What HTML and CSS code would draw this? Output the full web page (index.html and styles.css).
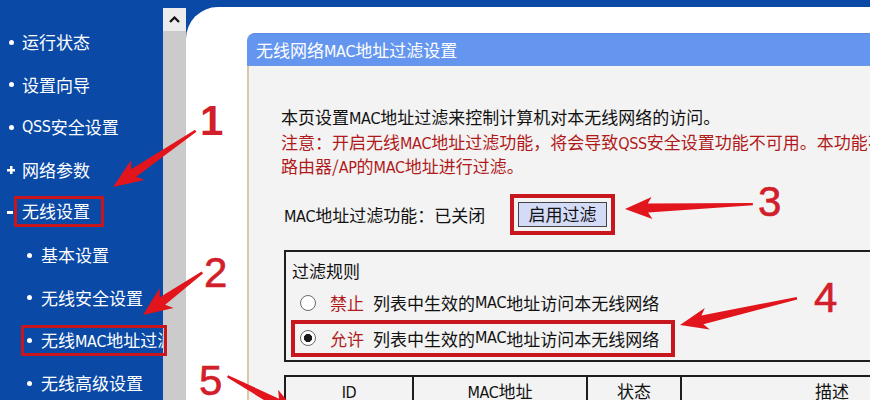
FILE: index.html
```html
<!DOCTYPE html>
<html lang="zh-CN">
<head>
<meta charset="utf-8">
<title>无线网络MAC地址过滤设置</title>
<link rel="stylesheet" href="styles.css">
</head>
<body>
<div class="app">
  <nav class="sidebar">
    <div class="item"><span class="dot"></span>运行状态</div>
    <div class="item"><span class="dot"></span>设置向导</div>
    <div class="item"><span class="dot"></span><span class="m">QSS</span>安全设置</div>
    <div class="item"><span class="plus"></span>网络参数</div>
    <div class="item"><span class="minus"></span><span class="mark mark-group">无线设置</span></div>
    <div class="item sub"><span class="dot"></span>基本设置</div>
    <div class="item sub"><span class="dot"></span>无线安全设置</div>
    <div class="item sub-marked"><span class="mark mark-sub"><span class="dot"></span><span class="clip">无线<span class="m">MAC</span>地址过滤</span></span></div>
    <div class="item sub"><span class="dot"></span>无线高级设置</div>
  </nav>
  <div class="scrollbar">
    <div class="scroll-up">
      <svg width="11" height="7" viewBox="0 0 11 7"><polyline points="1,6 5.5,1.5 10,6" fill="none" stroke="#111" stroke-width="2.2"/></svg>
    </div>
  </div>
  <main class="main">
    <div class="canvas">
      <section class="panel">
        <h1 class="panel-head">无线网络<span class="m">MAC</span>地址过滤设置</h1>
        <div class="panel-body">
          <p class="intro">本页设置<span class="m">MAC</span>地址过滤来控制计算机对本无线网络的访问。<br><span class="warn">注意：开启无线<span class="m">MAC</span>地址过滤功能，将会导致<span class="m">QSS</span>安全设置功能不可用。本功能不支持对<br>路由器/<span class="m">AP</span>的<span class="m">MAC</span>地址进行过滤。</span></p>
          <div class="status-row">
            <span class="status-label"><span class="m">MAC</span>地址过滤功能：已关闭</span>
            <span class="btn-mark"><button class="btn" type="button">启用过滤</button></span>
          </div>
          <div class="rules">
            <div class="rules-title">过滤规则</div>
            <div class="rule"><span class="radio"></span><span class="tag">禁止</span>列表中生效的<span class="m">MAC</span>地址访问本无线网络</div>
            <div class="rule rule-mark"><span class="radio on"></span><span class="tag">允许</span>列表中生效的<span class="m">MAC</span>地址访问本无线网络</div>
          </div>
          <table class="list">
            <thead>
              <tr>
                <th class="c-id"><span class="m">ID</span></th>
                <th class="c-mac"><span class="m">MAC</span>地址</th>
                <th class="c-st">状态</th>
                <th class="c-desc">描述</th>
              </tr>
            </thead>
            <tbody>
              <tr><td></td><td></td><td></td><td></td></tr>
            </tbody>
          </table>
        </div>
      </section>
    </div>
  </main>
</div>
<div class="annot">
  <svg class="arrows" width="870" height="400" viewBox="0 0 870 400">
    <g fill="#e2141c">
      <polygon transform="translate(113 187) rotate(-34.2)" points="0,0 30,-12 25,-4.5 100,-1.2 100,1.2 25,4.5 30,12"/>
      <polygon transform="translate(143 315) rotate(-35.6)" points="0,0 29,-12 24,-4.5 73,-1.2 73,1.2 24,4.5 29,12"/>
      <polygon transform="translate(625 209) rotate(-2.2)" points="0,0 27,-11 23,-4.5 128,-1.2 128,1.2 23,4.5 27,11"/>
      <polygon transform="translate(680 325) rotate(-12.9)" points="0,0 28,-11 23,-4.5 120,-1.2 120,1.2 23,4.5 28,11"/>
      <polygon transform="translate(298 414) rotate(-151.8)" points="0,0 29,-12 24,-4.5 80,-1.2 80,1.2 24,4.5 29,12"/>
    </g>
  </svg>
  <span class="num n1">1</span>
  <span class="num n2">2</span>
  <span class="num n3">3</span>
  <span class="num n4">4</span>
  <span class="num n5">5</span>
</div>
</body>
</html>
```
FILE: styles.css
```css
html, body {
  margin: 0;
  padding: 0;
}
body {
  width: 870px;
  height: 400px;
  overflow: hidden;
  position: relative;
  font-family: "Noto Sans CJK SC", "Noto Sans", sans-serif;
  font-size: 17px;
  color: #111;
  background: #0a4aa6;
}
.m {
  font-family: "Liberation Sans Narrow", "DejaVu Sans Condensed", "Liberation Sans", Arial, sans-serif;
  font-stretch: condensed;
  font-size: 16px;
  letter-spacing: -0.3px;
  line-height: 1;
}
.app {
  display: flex;
  height: 400px;
}

/* sidebar */
.sidebar {
  width: 163px;
  flex: none;
  padding-top: 21px;
  background: #0a4aa6;
  color: #fff;
}
.item {
  height: 42.6px;
  display: flex;
  align-items: center;
  padding-left: 9px;
  white-space: nowrap;
  line-height: 24px;
}
.item.sub {
  padding-left: 27px;
}
.item.sub-marked {
  padding-left: 21px;
}
.dot {
  width: 5px;
  height: 5px;
  border-radius: 50%;
  background: #fff;
  margin-right: 8px;
  flex: none;
}
.sub .dot,
.sub-marked .dot {
  margin-right: 9px;
}
.plus {
  width: 8px;
  height: 8px;
  margin-left: -2px;
  margin-right: 7px;
  background:
    linear-gradient(#fff, #fff) center / 8px 2.5px no-repeat,
    linear-gradient(#fff, #fff) center / 2.5px 8px no-repeat;
}
.minus {
  width: 6px;
  height: 2.5px;
  margin-left: -2px;
  margin-right: 1px;
  background: #fff;
}
.mark {
  border: 3px solid #c8161e;
  box-sizing: border-box;
  height: 31px;
  display: flex;
  align-items: center;
}
.mark-group {
  padding: 0 11px 0 5px;
  margin-top: -3px;
}
.mark-sub {
  width: 146px;
  padding: 0 1px 0 3px;
  position: relative;
  z-index: 2;
}
.clip {
  overflow: hidden;
  flex: 1;
  min-width: 0;
  white-space: nowrap;
}

/* scrollbar */
.scrollbar {
  width: 23px;
  flex: none;
  margin-top: 8px;
  background: #cbcbcb;
}
.scroll-up {
  height: 23px;
  background: #ececec;
  display: flex;
  align-items: center;
  justify-content: center;
}

/* main */
.main {
  flex: 1;
  min-width: 0;
  padding-top: 7px;
  background: #0a4aa6;
  overflow: hidden;
}
.canvas {
  height: 100%;
  box-sizing: border-box;
  background: #fff;
  border-top-left-radius: 32px;
  padding: 26px 0 0 61px;
  overflow: hidden;
}
.panel {
  width: 820px;
}
.panel-head {
  margin: 0;
  height: 33px;
  box-sizing: border-box;
  background: #6596ef;
  border-top: 1px solid #5b8ae0;
  border-bottom: 1px solid #6f99de;
  border-top-left-radius: 8px;
  color: #fff;
  font-size: 17px;
  font-weight: normal;
  line-height: 31px;
  padding-left: 9px;
  white-space: nowrap;
}
.panel-body {
  background: #f3f3f3;
  border-left: 2px solid #dcc8a2;
  padding: 39px 0 0 35px;
  height: 340px;
}
.intro {
  margin: 0 0 0 -3px;
  line-height: 24.5px;
  white-space: nowrap;
}
.warn {
  color: #b01a1a;
}
.status-row {
  display: flex;
  align-items: center;
  margin-top: 15px;
  height: 41px;
}
.status-label {
  width: 226px;
  white-space: nowrap;
}
.btn-mark {
  border: 4px solid #c8161e;
  padding: 4px;
  display: flex;
}
.btn {
  width: 89px;
  height: 25px;
  margin: 0;
  padding: 0;
  box-sizing: border-box;
  background: #d4dbf7;
  border: 1px solid #444;
  font-family: "Noto Sans CJK SC", sans-serif;
  font-size: 17px;
  line-height: 22px;
  color: #111;
}
.rules {
  margin-top: 15px;
  width: 700px;
  border: 2px solid #1e1e1e;
  padding: 7px 0 3px 5px;
}
.rules-title {
  line-height: 24px;
  margin-left: 1px;
}
.rule {
  display: flex;
  align-items: center;
  height: 24px;
  margin-top: 8px;
  padding-left: 9px;
  white-space: nowrap;
}
.rule-mark {
  margin-top: 5px;
  height: 37px;
  width: 384px;
  box-sizing: border-box;
  border: 4px solid #c8161e;
  padding-left: 5px;
}
.radio {
  width: 16px;
  height: 16px;
  box-sizing: border-box;
  border-radius: 50%;
  border: 1px solid #6a6a6a;
  background: #fff;
  margin-right: 14px;
  flex: none;
}
.radio.on {
  background: radial-gradient(circle, #1a1a1a 0 3.8px, #fff 4.4px);
}
.tag {
  color: #b01c1c;
  margin-right: 9px;
}
.list {
  margin-top: 13px;
  width: 700px;
  border-collapse: collapse;
  border: 2px solid #1e1e1e;
  table-layout: fixed;
}
.list th,
.list td {
  border: 2px solid #1e1e1e;
  font-weight: normal;
  text-align: center;
  height: 28px;
  padding: 0;
  line-height: 24px;
}
.c-id { width: 126px; }
.c-mac { width: 172px; }
.c-st { width: 92px; }

/* annotations overlay */
.annot {
  position: absolute;
  left: 0;
  top: 0;
  width: 870px;
  height: 400px;
  pointer-events: none;
}
.arrows {
  position: absolute;
  left: 0;
  top: 0;
}
.num {
  position: absolute;
  font-family: "Liberation Sans", Arial, sans-serif;
  font-size: 42px;
  line-height: 42px;
  color: #d2202a;
  -webkit-text-stroke: 0.6px #d2202a;
}
.n1 { left: 200px; top: 100px; font-weight: bold; -webkit-text-stroke: 0; }
.n2 { left: 204px; top: 252px; }
.n3 { left: 758px; top: 181px; }
.n4 { left: 814px; top: 277px; }
.n5 { left: 199px; top: 360px; }
```
